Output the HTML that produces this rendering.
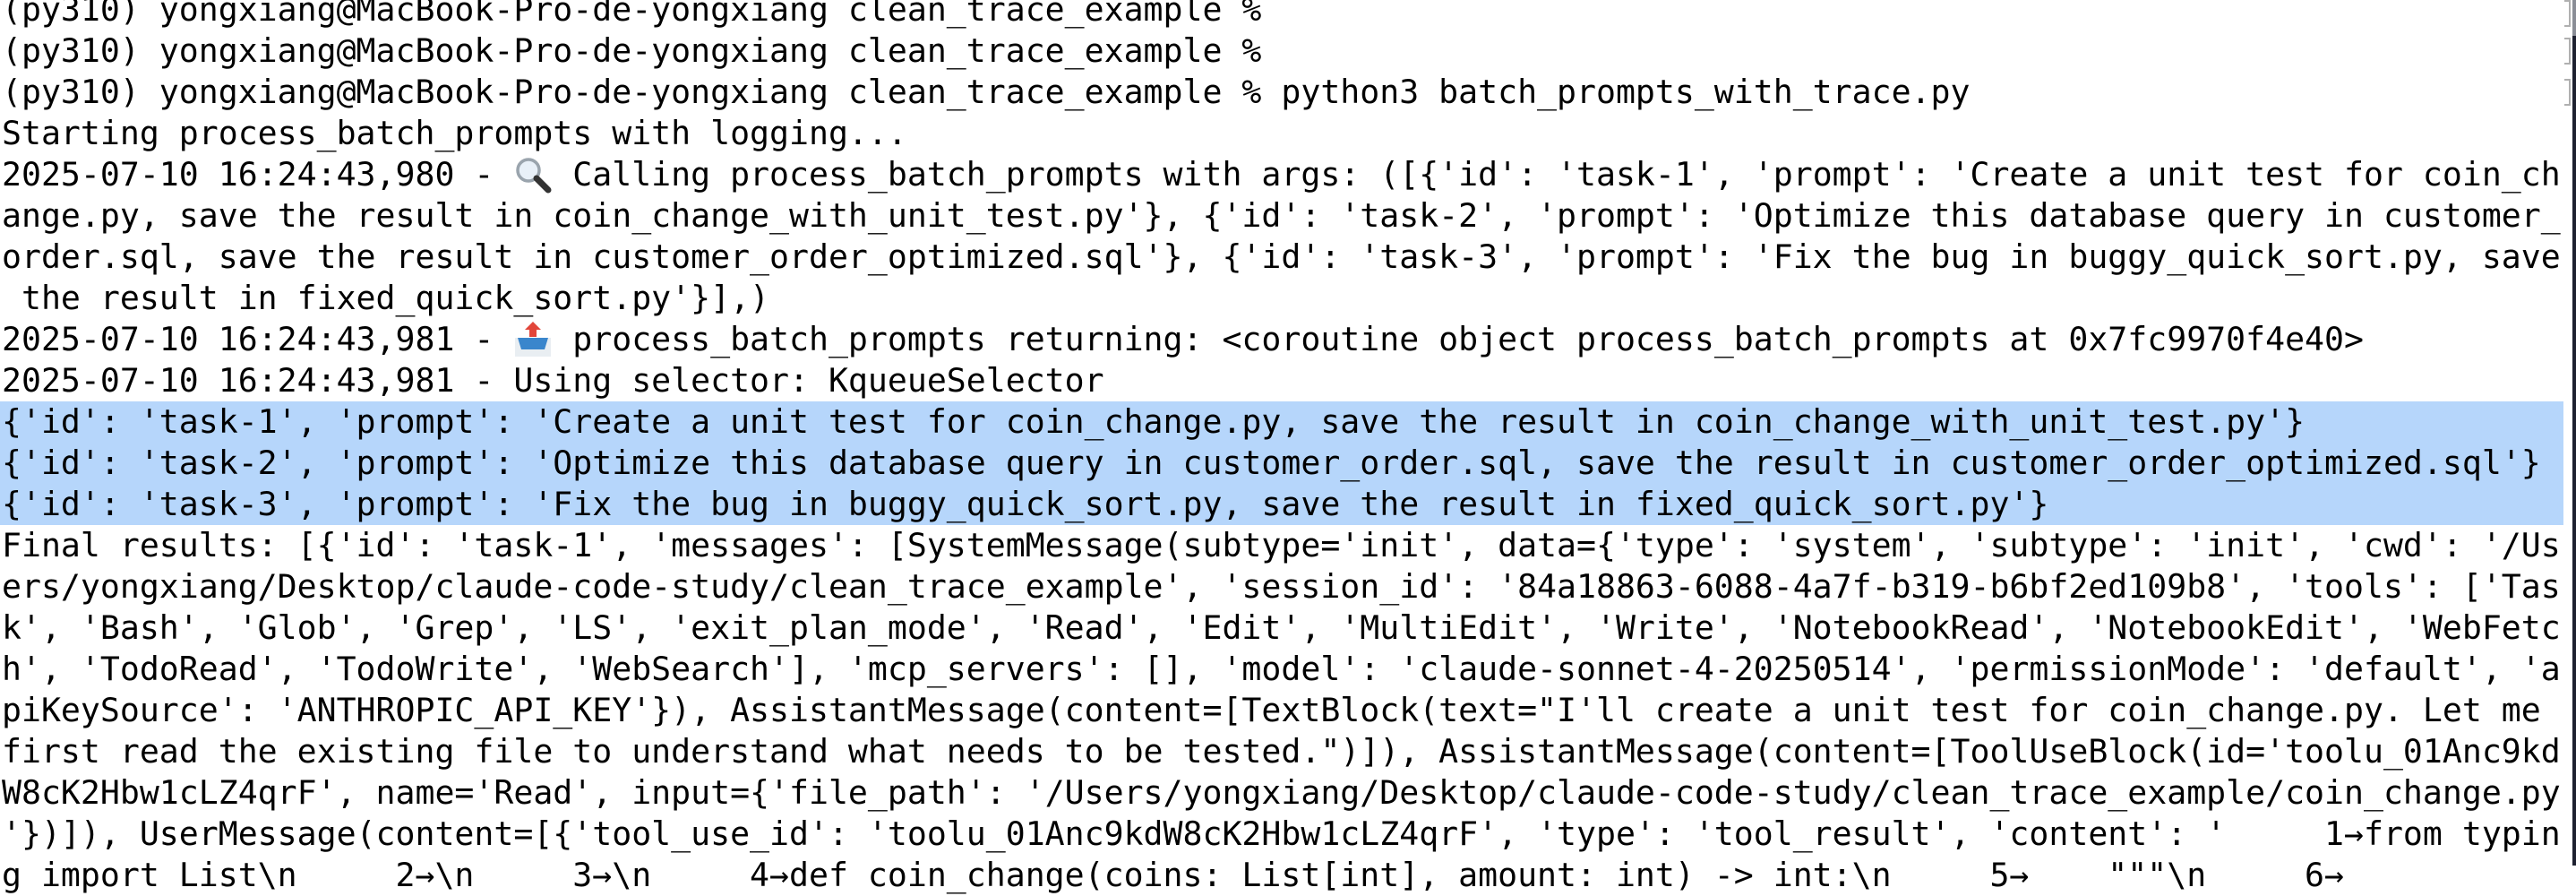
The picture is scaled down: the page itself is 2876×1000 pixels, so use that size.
<!DOCTYPE html>
<html><head><meta charset="utf-8">
<style>
html,body{margin:0;padding:0;}
body{width:2876px;height:966px;overflow:hidden;background:#fff;position:relative;}
#t{position:absolute;left:0;top:-12px;width:2872px;font-family:"DejaVu Sans Mono","Liberation Mono",monospace;font-size:36.5px;line-height:46px;color:#000;}
.l{white-space:pre;height:46px;padding-left:2px;}
.h{background:#b6d6fb;width:2860px;}
.e{display:inline-block;width:2ch;height:46px;vertical-align:top;position:relative;}
.e svg{position:absolute;left:0;top:2px;}
#bar{position:absolute;left:2872px;top:0;width:4px;height:966px;background:#1e2130;}
#bar2{position:absolute;left:2872px;top:0;width:4px;height:40px;background:#8a8d96;}
.br{position:absolute;left:2863px;width:5px;height:26px;border:2px solid #b0b0b0;border-left:none;}
</style></head><body>
<div id="t">
<div class="l">(py310) yongxiang@MacBook-Pro-de-yongxiang clean_trace_example %</div>
<div class="l">(py310) yongxiang@MacBook-Pro-de-yongxiang clean_trace_example %</div>
<div class="l">(py310) yongxiang@MacBook-Pro-de-yongxiang clean_trace_example % python3 batch_prompts_with_trace.py</div>
<div class="l">Starting process_batch_prompts with logging...</div>
<div class="l">2025-07-10 16:24:43,980 - <span class="e"><svg width="44" height="42" viewBox="0 0 44 42"><circle cx="17" cy="16" r="12" fill="#e8f0f8" stroke="#9aa4ad" stroke-width="3.5"/><path d="M26 25 L39 38" stroke="#333" stroke-width="7" stroke-linecap="round"/></svg></span> Calling process_batch_prompts with args: ([{'id': 'task-1', 'prompt': 'Create a unit test for coin_ch</div>
<div class="l">ange.py, save the result in coin_change_with_unit_test.py'}, {'id': 'task-2', 'prompt': 'Optimize this database query in customer_</div>
<div class="l">order.sql, save the result in customer_order_optimized.sql'}, {'id': 'task-3', 'prompt': 'Fix the bug in buggy_quick_sort.py, save</div>
<div class="l"> the result in fixed_quick_sort.py'}],)</div>
<div class="l">2025-07-10 16:24:43,981 - <span class="e"><svg width="44" height="42" viewBox="0 0 44 42"><path d="M22 1 L31 10 H26 V18 H18 V10 H13 Z" fill="#e2463a"/><path d="M2 19 H42 V40 H2 Z" fill="#e9eef2"/><path d="M5 19 H39 L35 32 H9 Z" fill="#3a86cc"/></svg></span> process_batch_prompts returning: &lt;coroutine object process_batch_prompts at 0x7fc9970f4e40&gt;</div>
<div class="l">2025-07-10 16:24:43,981 - Using selector: KqueueSelector</div>
<div class="l h">{'id': 'task-1', 'prompt': 'Create a unit test for coin_change.py, save the result in coin_change_with_unit_test.py'}</div>
<div class="l h">{'id': 'task-2', 'prompt': 'Optimize this database query in customer_order.sql, save the result in customer_order_optimized.sql'}</div>
<div class="l h">{'id': 'task-3', 'prompt': 'Fix the bug in buggy_quick_sort.py, save the result in fixed_quick_sort.py'}</div>
<div class="l">Final results: [{'id': 'task-1', 'messages': [SystemMessage(subtype='init', data={'type': 'system', 'subtype': 'init', 'cwd': '/Us</div>
<div class="l">ers/yongxiang/Desktop/claude-code-study/clean_trace_example', 'session_id': '84a18863-6088-4a7f-b319-b6bf2ed109b8', 'tools': ['Tas</div>
<div class="l">k', 'Bash', 'Glob', 'Grep', 'LS', 'exit_plan_mode', 'Read', 'Edit', 'MultiEdit', 'Write', 'NotebookRead', 'NotebookEdit', 'WebFetc</div>
<div class="l">h', 'TodoRead', 'TodoWrite', 'WebSearch'], 'mcp_servers': [], 'model': 'claude-sonnet-4-20250514', 'permissionMode': 'default', 'a</div>
<div class="l">piKeySource': 'ANTHROPIC_API_KEY'}), AssistantMessage(content=[TextBlock(text="I'll create a unit test for coin_change.py. Let me </div>
<div class="l">first read the existing file to understand what needs to be tested.")]), AssistantMessage(content=[ToolUseBlock(id='toolu_01Anc9kd</div>
<div class="l">W8cK2Hbw1cLZ4qrF', name='Read', input={'file_path': '/Users/yongxiang/Desktop/claude-code-study/clean_trace_example/coin_change.py</div>
<div class="l">'})]), UserMessage(content=[{'tool_use_id': 'toolu_01Anc9kdW8cK2Hbw1cLZ4qrF', 'type': 'tool_result', 'content': '     1→from typin</div>
<div class="l">g import List\n     2→\n     3→\n     4→def coin_change(coins: List[int], amount: int) -&gt; int:\n     5→    """\n     6→   </div>
</div>
<div class="br" style="top:0px"></div>
<div class="br" style="top:42px"></div>
<div class="br" style="top:88px"></div>
<div id="bar"></div><div id="bar2"></div>
</body></html>
